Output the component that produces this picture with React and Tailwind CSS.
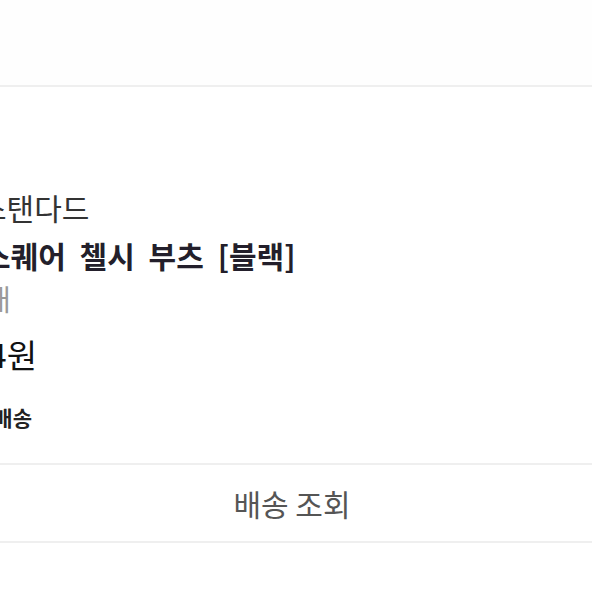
import React from "react";

const order = {
  brand: "스탠다드",
  name: "스퀘어 첼시 부츠 [블랙]",
  qty: "1개",
  price: "64,904원",
  shipping: "무료배송",
};

const App = () => {
  return (
    <div className="w-[592px] h-[592px] overflow-hidden bg-white font-['Noto_Sans_CJK_KR','Noto_Sans',sans-serif]">
      {/* top area */}
      <div className="h-[85px] bg-[#fefefe]"></div>
      <div className="h-[2px] bg-[#efefef]"></div>

      {/* order item */}
      <section className="pt-[100px] pb-[31px]">
        <div className="ml-[-21px] h-[40px] leading-[40px] text-[30px] text-[#333] whitespace-nowrap">
          {order.brand}
        </div>
        <div className="mt-[8px] ml-[-17px] h-[40px] leading-[40px] text-[30px] font-bold text-[#231f2b] whitespace-nowrap [word-spacing:7px]">
          {order.name}
        </div>
        <div className="mt-[3px] w-[11px] h-[40px] leading-[40px] flex justify-end text-[29px] text-[#999] whitespace-nowrap">
          <span className="shrink-0">{order.qty}</span>
        </div>
        <div className="mt-[14px] w-[37px] h-[44px] leading-[44px] flex justify-end text-[33px] text-[#111] whitespace-nowrap">
          <span className="shrink-0">{order.price}</span>
        </div>
        <div className="mt-[26px] w-[32px] h-[30px] leading-[30px] flex justify-end text-[21px] font-bold text-[#222] whitespace-nowrap">
          <span className="shrink-0">{order.shipping}</span>
        </div>
      </section>

      {/* tracking button */}
      <div className="h-[2px] bg-[#efefef]"></div>
      <button className="w-full h-[76px] pr-[8px] flex items-center justify-center text-[30px] text-[#555] bg-white">
        배송 조회
      </button>
      <div className="h-[2px] bg-[#efefef]"></div>
    </div>
  );
};

export default App;
